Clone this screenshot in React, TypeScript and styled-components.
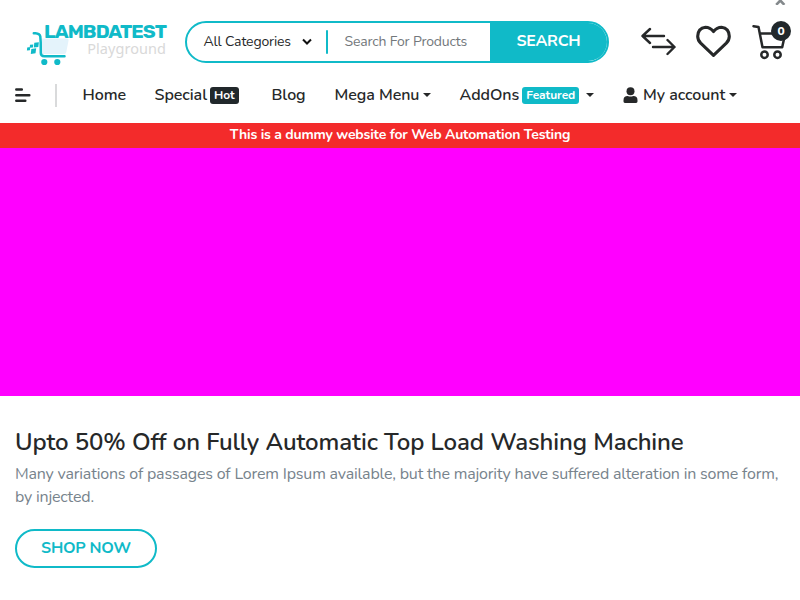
import React from 'react';
import styled, { createGlobalStyle } from 'styled-components';

const teal = '#10bac8';
const ink = '#262829';

const GlobalStyle = createGlobalStyle`
  *, *::before, *::after { box-sizing: border-box; }
  body { margin: 0; background: #fff; overflow: hidden; }
`;

const Page = styled.div`
  width: 800px;
  height: 600px;
  overflow: hidden;
  position: relative;
  background: #fff;
  color: ${ink};
  font-family: Nunito, Lato, sans-serif;
`;

const CloseMark = styled.svg`
  position: absolute;
  left: 774px;
  top: 0;
`;

const Header = styled.header`
  display: flex;
  height: 74px;
  padding: 21px 9px 0 26px;
`;

const Logo = styled.a`
  display: grid;
  width: 141px;
  height: 45px;
  margin-right: 18px;
  & > * { grid-area: 1 / 1; }
`;

const LogoWords = styled.div`
  display: flex;
  flex-direction: column;
  align-items: flex-end;
  white-space: nowrap;
`;

const Brand = styled.span`
  font: 700 19.5px/20px Rubik, Roboto, sans-serif;
  letter-spacing: -0.95px;
  padding: 1px 1px 0 0;
  color: ${teal};
`;

const BrandSub = styled.span`
  font: 400 14.5px/16px 'Noto Sans', sans-serif;
  letter-spacing: 0.05px;
  margin-top: -2px;
  padding-right: 1px;
  color: #d9d9d9;
`;

const SearchForm = styled.div`
  display: flex;
  width: 424px;
  height: 42px;
  border: 2px solid ${teal};
  border-radius: 21px;
  overflow: hidden;
  font-size: 14px;
  line-height: 37px;
  white-space: nowrap;
`;

const CategoryPicker = styled.div`
  display: flex;
  align-items: center;
  width: 139px;
  padding: 0 0 1px 16.5px;
  letter-spacing: -0.14px;
  svg { margin: 1px 0 0 11px; }
`;

const Divider = styled.i`
  width: 2px;
  height: 24px;
  margin-top: 7px;
  border-radius: 1px;
  background: ${teal};
`;

const SearchField = styled.div`
  flex: 1;
  padding-left: 16.5px;
  letter-spacing: -0.17px;
  color: #72777b;
`;

const SearchButton = styled.div`
  width: 117px;
  background: ${teal};
  color: #fff;
  font-size: 16px;
  font-weight: 700;
  letter-spacing: -0.25px;
  line-height: 37px;
  text-align: center;
`;

const Actions = styled.div`
  display: flex;
  gap: 20px;
  margin-left: 32px;
  color: ${ink};
`;

const CartButton = styled.div`
  position: relative;
  width: 39px;
  height: 42px;
`;

const CartCount = styled.span`
  position: absolute;
  right: 0;
  top: 0;
  width: 20px;
  height: 20px;
  border-radius: 50%;
  background: #21282b;
  color: #fff;
  font-size: 12px;
  font-weight: 800;
  line-height: 20px;
  text-align: center;
`;

const Nav = styled.nav`
  display: flex;
  align-items: center;
  height: 49px;
  padding: 0 0 7px 15px;
`;

const NavRule = styled.i`
  width: 2px;
  height: 23px;
  margin: 0 25.5px 0 24px;
  background: #d9dadb;
`;

const NavItem = styled.a<{ $width: number }>`
  display: flex;
  align-items: center;
  width: ${p => p.$width}px;
  font-size: 16px;
  font-weight: 600;
  line-height: 24px;
  letter-spacing: -0.05px;
  white-space: nowrap;
`;

const Badge = styled.span<{ $color: string }>`
  height: 17px;
  margin: 1px 0 0 3px;
  padding: 0 4px;
  border-radius: 3px;
  background: ${p => p.$color};
  color: #fff;
  font-size: 12px;
  font-weight: 700;
  line-height: 17px;
`;

const AccountLabel = styled.span`
  margin-left: 5.5px;
`;

const Caret = styled.i<{ $gap?: number }>`
  margin-left: ${p => p.$gap ?? 4}px;
  border: 4px solid transparent;
  border-top-color: ${ink};
  border-bottom: 0;
`;

const Notice = styled.div`
  height: 25px;
  background: #f32b2b;
  color: #fff;
  font-size: 14px;
  font-weight: 700;
  line-height: 23px;
  letter-spacing: -0.19px;
  text-align: center;
`;

const Banner = styled.div`
  height: 248px;
  background: #f0f;
`;

const Promo = styled.section`
  padding: 32px 15px 0;
`;

const PromoTitle = styled.h3`
  margin: 0;
  font-size: 24px;
  font-weight: 600;
  line-height: 29px;
  letter-spacing: -0.095px;
  white-space: nowrap;
`;

const PromoText = styled.p`
  margin: 6px 0 20px;
  color: #77838c;
  font-size: 16px;
  line-height: 23px;
  letter-spacing: -0.185px;
`;

const ShopButton = styled.a`
  display: flex;
  justify-content: center;
  width: 142px;
  height: 39px;
  border: 2px solid ${teal};
  border-radius: 20px;
  color: ${teal};
  font-size: 16px;
  font-weight: 700;
  line-height: 34px;
  letter-spacing: -0.26px;
`;

function LogoCart() {
  return (
    <svg width="50" height="45" viewBox="0 0 50 45">
      <path d="M15.500 17.500h25q2.400 0 2 2.200l-2.200 11.200q-.5 2.200-2.600 2.200H16.200z" fill="#e4f3fb" />
      <path d="M7.800 12.300h1.700q4.300.4 4.800 3.200l.4 5.500.1 11q0 3.200 3.500 3.200h20.200" fill="none" stroke={teal} strokeWidth="2.500" strokeLinecap="round" strokeLinejoin="round" />
      <g fill={teal}>
        <path d="M8.300 21.800l4.600-.6-.6 4.700-4.500.6zM4 23.800l3.300-.4-.4 3-3.200.4zM1.200 26.400l3-.4-.3 3.200-3 .4zM5.300 28l4.900-.7-.7 4.900-4.700.7z" />
        <circle cx="18.300" cy="41" r="3.100" />
        <circle cx="31.300" cy="41" r="3.100" />
      </g>
    </svg>
  );
}

export default function App() {
  return (
    <Page>
      <GlobalStyle />
      <CloseMark width="12" height="5" viewBox="0 0 12 5" fill="none" stroke="#84898c" strokeWidth="2.600">
        <path d="M2.200 4.800 6.300 .5l4.100 4.300" />
      </CloseMark>
      <Header>
        <Logo>
          <LogoCart />
          <LogoWords>
            <Brand>LAMBDATEST</Brand>
            <BrandSub>Playground</BrandSub>
          </LogoWords>
        </Logo>
        <SearchForm>
          <CategoryPicker>
            All Categories
            <svg width="10" height="8" viewBox="0 0 10 8" fill="none" stroke="#111" strokeWidth="2">
              <path d="M1 1.500l4 4 4-4" />
            </svg>
          </CategoryPicker>
          <Divider />
          <SearchField>Search For Products</SearchField>
          <SearchButton>SEARCH</SearchButton>
        </SearchForm>
        <Actions>
          <svg width="35" height="42" viewBox="0 0 35 42" fill="none" stroke="currentColor" strokeWidth="2.400" strokeLinecap="round" strokeLinejoin="round">
            <path d="M23 15H1.500M9 8l-7.500 7L9 22M12 26h21.500M26.500 19l7 7-7 7" />
          </svg>
          <svg width="36" height="42" viewBox="0 0 36 42" fill="none" stroke="currentColor" strokeWidth="3.100" strokeLinejoin="round">
            <path d="M17.500 10.500Q14 6.300 9.500 6.300 2 7.200 1.700 15.200q0 4 3 7L17.500 34.400 30.300 22.200q3-3 3-7Q33 7.200 25.500 6.300 21 6.300 17.500 10.500z" />
          </svg>
          <CartButton>
            <svg width="39" height="42" viewBox="0 0 39 42" fill="none" stroke="currentColor" strokeWidth="2.500" strokeLinejoin="round" strokeLinecap="round">
              <path d="M1.500 5.200l5 .8 4 20.200h19.700l3-13.700H8" />
              <circle cx="12.500" cy="33.700" r="3.200" />
              <circle cx="25.500" cy="33.700" r="3.200" />
            </svg>
            <CartCount>0</CartCount>
          </CartButton>
        </Actions>
      </Header>
      <Nav>
        <svg width="16" height="16" viewBox="0 0 16 16" stroke={ink} strokeWidth="2.500" strokeLinecap="round">
          <path d="M1.300 2.500h5.500M1.300 8.300h13M1.300 13.800h9" />
        </svg>
        <NavRule />
        <NavItem $width={72}>Home</NavItem>
        <NavItem $width={117}>Special<Badge $color="#21282b">Hot</Badge></NavItem>
        <NavItem $width={63}>Blog</NavItem>
        <NavItem $width={125}>Mega Menu<Caret /></NavItem>
        <NavItem $width={163}>AddOns<Badge $color={teal}>Featured</Badge><Caret $gap={7} /></NavItem>
        <NavItem $width={120}>
          <svg width="15" height="16" viewBox="0 0 15 16" fill={ink}>
            <circle cx="7.500" cy="4.200" r="4" />
            <path d="M.5 14.500v-1.300Q.5 9 4.800 9q2.700 1.200 5.400 0 4.300 0 4.300 4.200v1.300q0 1.400-1.400 1.400H1.900Q.5 15.900.5 14.500z" />
          </svg>
          <AccountLabel>My account</AccountLabel><Caret />
        </NavItem>
      </Nav>
      <Notice>This is a dummy website for Web Automation Testing</Notice>
      <Banner />
      <Promo>
        <PromoTitle>Upto 50% Off on Fully Automatic Top Load Washing Machine</PromoTitle>
        <PromoText>
          Many variations of passages of Lorem Ipsum available, but the majority have suffered alteration in some form, by injected.
        </PromoText>
        <ShopButton>SHOP NOW</ShopButton>
      </Promo>
    </Page>
  );
}
